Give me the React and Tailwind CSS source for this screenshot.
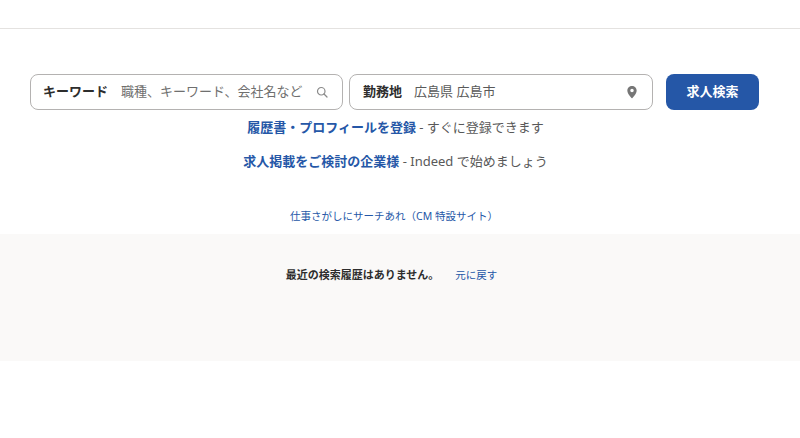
const font = { fontFamily: '"Noto Sans", "Noto Sans CJK JP", sans-serif' };

function SearchIcon() {
  return (
    <svg width="12" height="12" viewBox="0 0 24 24" fill="none" stroke="#8a8a8a" strokeWidth="2.4" strokeLinecap="round">
      <circle cx="10.5" cy="10.5" r="7.5" />
      <path d="M16 16l6 6" />
    </svg>
  );
}

function PinIcon() {
  return (
    <svg width="14" height="14" viewBox="0 0 24 24">
      <path
        fillRule="evenodd"
        fill="#767676"
        d="M12 1.5c-4.4 0-8 3.5-8 7.9 0 5.6 6.4 11.9 7.3 12.8.4.4 1 .4 1.4 0 .9-.9 7.3-7.2 7.3-12.8 0-4.4-3.6-7.9-8-7.9zm0 11a3 3 0 1 1 0-6 3 3 0 0 1 0 6z"
      />
    </svg>
  );
}

export default function App() {
  return (
    <div className="w-[800px] h-[438px] bg-white overflow-hidden text-[#2d2d2d]" style={font}>
      <div className="h-[29px] border-b border-[#e4e2e0]" />
      <div className="flex items-start pt-[45px] pl-[30px]">
        <div className="w-[313px] h-[36px] flex items-center rounded-lg border border-[#b4b2b1] pl-[12px] pr-[14px]">
          <span className="text-[13px] font-bold w-[78px] shrink-0">キーワード</span>
          <span className="text-[13px] text-[#6f6f6f] flex-1 whitespace-nowrap">職種、キーワード、会社名など</span>
          <SearchIcon />
        </div>
        <div className="ml-[6px] w-[304px] h-[36px] flex items-center rounded-lg border border-[#b4b2b1] pl-[13px] pr-[13px]">
          <span className="text-[13px] font-bold w-[51px] shrink-0">勤務地</span>
          <span className="text-[13px] text-[#595959] flex-1 whitespace-nowrap">広島県 広島市</span>
          <PinIcon />
        </div>
        <button className="ml-[13px] w-[93px] h-[36px] rounded-lg bg-[#2557a7] text-white text-[13px] font-bold">求人検索</button>
      </div>
      <div className="flex flex-col items-center text-[13px] pr-[9px]">
        <div className="h-[18px] mt-[8px] leading-[18px] whitespace-nowrap text-[#595959]">
          <span className="font-bold text-[#2557a7]">履歴書・プロフィールを登録</span> - すぐに登録できます
        </div>
        <div className="h-[18px] mt-[16px] leading-[18px] whitespace-nowrap text-[#595959]">
          <span className="font-bold text-[#2557a7]">求人掲載をご検討の企業様</span> - Indeed で始めましょう
        </div>
      </div>
      <div className="mt-[38px] h-[16px] leading-[16px] text-center text-[10.5px] text-[#2557a7] pr-[12px]">仕事さがしにサーチあれ（CM 特設サイト）</div>
      <div className="mt-[10px] h-[127px] bg-[#faf9f8] flex justify-center pt-[33px] pr-[17px]">
        <span className="h-[16px] leading-[16px] text-[11px] font-bold text-[#2d2d2d]">最近の検索履歴はありません。</span>
        <span className="h-[16px] leading-[16px] ml-[16px] text-[10.5px] text-[#2557a7]">元に戻す</span>
      </div>
    </div>
  );
}
